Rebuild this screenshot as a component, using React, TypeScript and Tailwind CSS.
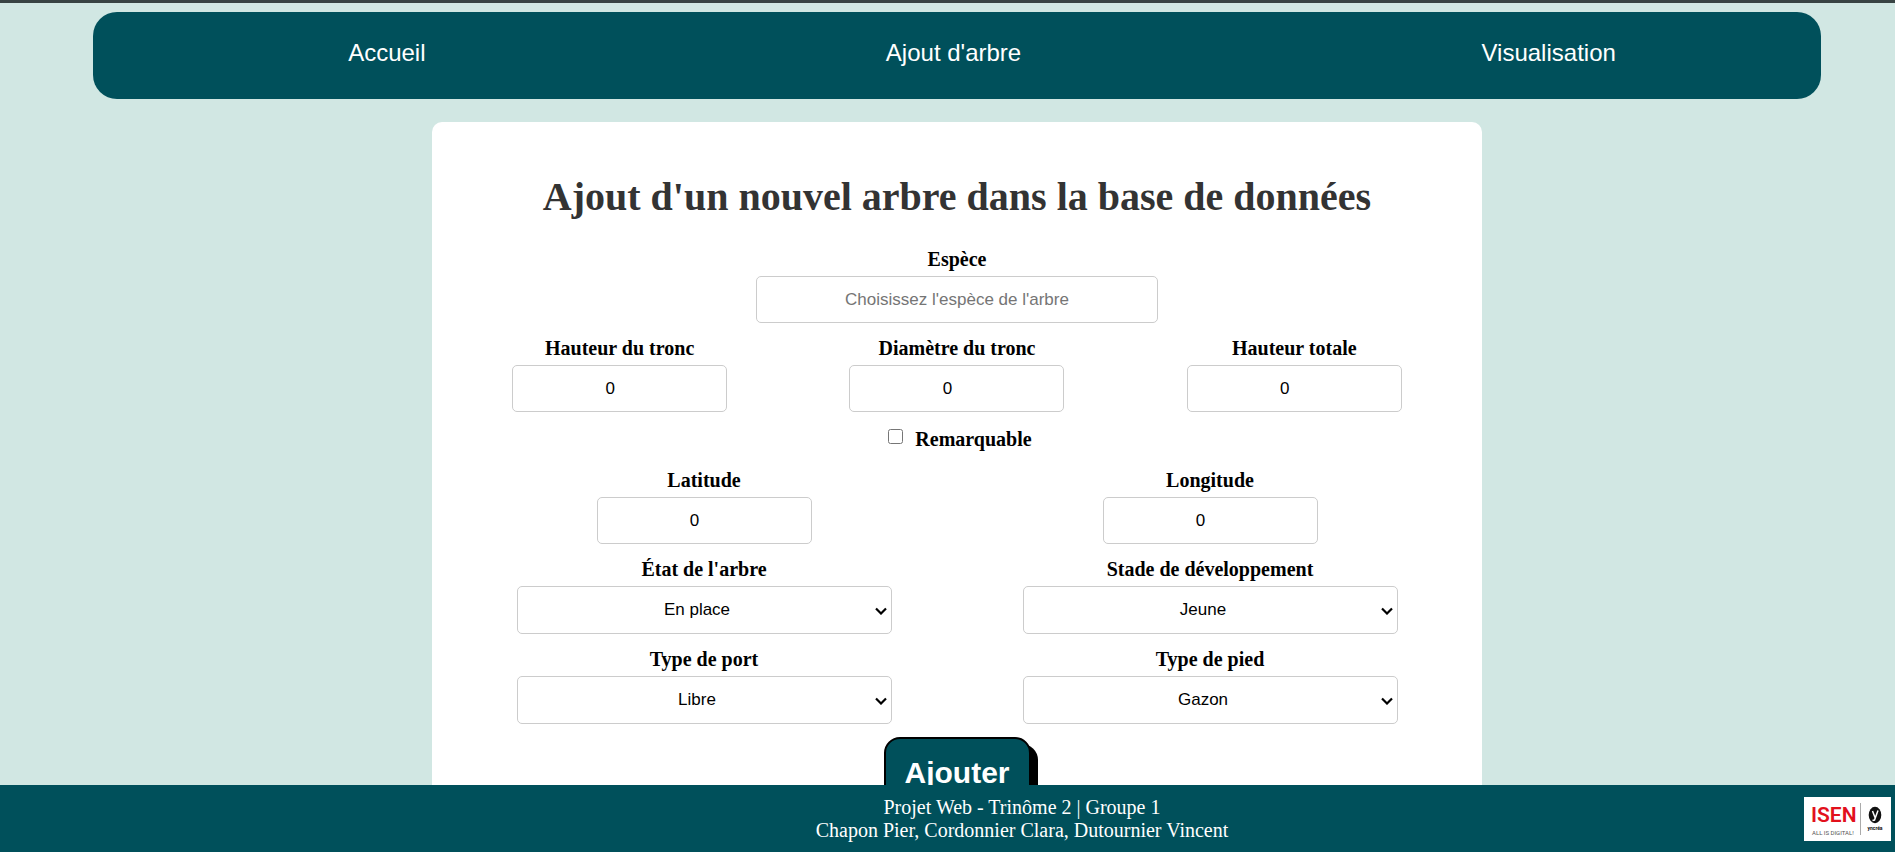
import type { ReactNode } from "react";

const control =
  "rounded-[5px] border border-[#ccc] bg-white py-3 pl-3 text-center font-['Liberation_Sans',Arial,sans-serif] text-[17px]";

const links = ["Accueil", "Ajout d'arbre", "Visualisation"];

function Row({ children }: { children: ReactNode }) {
  return <div className="flex w-full">{children}</div>;
}

function Field({ id, label, children }: { id: string; label: string; children: ReactNode }) {
  return (
    <div className="mb-[13px] flex flex-1 flex-col items-center gap-[5px]">
      <label htmlFor={id} className="text-xl leading-6 font-bold">
        {label}
      </label>
      {children}
    </div>
  );
}

function NumberField({ id, label }: { id: string; label: string }) {
  return (
    <Field id={id} label={label}>
      <input id={id} type="number" defaultValue={0} className={`${control} h-[47px] w-[215px] pr-4`} />
    </Field>
  );
}

function SelectField({ id, label, options }: { id: string; label: string; options: string[] }) {
  return (
    <Field id={id} label={label}>
      <div className="relative">
        <select id={id} className={`${control} h-12 w-[375px] appearance-none pr-[26px] leading-[22px]`}>
          {options.map((option) => (
            <option key={option}>{option}</option>
          ))}
        </select>
        <svg
          viewBox="0 0 12 8"
          className="pointer-events-none absolute top-[21px] right-[5px] h-2 w-3"
          fill="none"
          stroke="#000"
          strokeWidth="2.2"
          aria-hidden="true"
        >
          <path d="M1 1.500l5 5 5-5" />
        </svg>
      </div>
    </Field>
  );
}

function Logo() {
  return (
    <svg viewBox="0 0 87 44" className="mr-1 h-11 w-[87px] shrink-0" role="img" aria-label="ISEN Yncréa">
      <rect width="87" height="44" fill="#fff" />
      <text x="7" y="25" fill="#e2101c" fontSize="21" fontWeight="600" fontFamily="Roboto,'Liberation Sans',sans-serif">
        ISEN
      </text>
      <text x="8" y="38" fill="#555" fontSize="6" fontFamily="Roboto,'Liberation Sans',sans-serif">
        ALL IS DIGITAL!
      </text>
      <path d="M56.500 6v32" stroke="#aaa" strokeWidth="1" />
      <ellipse cx="71" cy="18" rx="6.300" ry="8.300" fill="#111" />
      <path d="M68.500 14l2.500 6.500M74 13.500l-3.500 9.500-2 .5" stroke="#fff" strokeWidth="1.500" fill="none" />
      <text x="71" y="33" textAnchor="middle" fill="#111" fontSize="5" fontWeight="700" fontFamily="Roboto,'Liberation Sans',sans-serif">
        yncréa
      </text>
    </svg>
  );
}

export default function App() {
  return (
    <div className="flex h-screen flex-col border-t-[3px] border-[#384343] bg-[#d1e7e3] font-['Liberation_Serif','Times_New_Roman',serif] text-black">
      <div className="min-h-0 flex-1 overflow-y-auto pl-[19px] [scrollbar-width:none]">
        <nav className="mx-[74px] mt-[9px] rounded-3xl bg-[#00505b]">
          <ul className="-mr-[25px] ml-[25px] flex h-[87px] justify-around pt-[27px] font-['Liberation_Sans',Arial,sans-serif] text-2xl leading-7 text-white">
            {links.map((link) => (
              <li key={link}>
                <a href="#">{link}</a>
              </li>
            ))}
          </ul>
        </nav>

        <main className="mx-auto mt-[23px] mb-5 w-full max-w-[1050px] rounded-[10px] bg-white px-[19px] pt-[51px] pb-5">
          <h1 className="text-center text-[40px] leading-12 font-bold text-[#333]">
            Ajout d'un nouvel arbre dans la base de données
          </h1>
          <form className="mt-[26px] flex flex-col items-center">
            <Field id="espece" label="Espèce">
              <input
                id="espece"
                type="text"
                placeholder="Choisissez l'espèce de l'arbre"
                className={`${control} h-[47px] w-[402px] pr-3 placeholder:text-[#757575]`}
              />
            </Field>
            <Row>
              <NumberField id="hauteur-tronc" label="Hauteur du tronc" />
              <NumberField id="diametre-tronc" label="Diamètre du tronc" />
              <NumberField id="hauteur-totale" label="Hauteur totale" />
            </Row>
            <div className="flex h-[43px] items-start gap-3 pl-1.5">
              <input id="remarquable" type="checkbox" className="mt-1 size-[15px]" />
              <label htmlFor="remarquable" className="text-xl leading-7 font-bold">
                Remarquable
              </label>
            </div>
            <Row>
              <NumberField id="latitude" label="Latitude" />
              <NumberField id="longitude" label="Longitude" />
            </Row>
            <Row>
              <SelectField id="etat" label="État de l'arbre" options={["En place", "Abattu", "Remplacé"]} />
              <SelectField id="stade" label="Stade de développement" options={["Jeune", "Adulte", "Vieux"]} />
            </Row>
            <Row>
              <SelectField id="port" label="Type de port" options={["Libre", "Couronné", "Rideau"]} />
              <SelectField id="pied" label="Type de pied" options={["Gazon", "Terre", "Bande de terre"]} />
            </Row>
            <button
              type="submit"
              className="rounded-2xl border-2 border-black bg-[#00505b] px-[19px] py-4 font-['Liberation_Sans',Arial,sans-serif] text-3xl font-bold text-white shadow-[7px_7px_0_#000]"
            >
              Ajouter
            </button>
          </form>
        </main>
      </div>

      <footer className="flex h-[67px] shrink-0 items-center bg-[#00505b] pl-60 text-white">
        <div className="flex-1 text-center text-xl leading-[23px]">
          <p>Projet Web - Trinôme 2 | Groupe 1</p>
          <p>Chapon Pier, Cordonnier Clara, Dutournier Vincent</p>
        </div>
        <Logo />
      </footer>
    </div>
  );
}
